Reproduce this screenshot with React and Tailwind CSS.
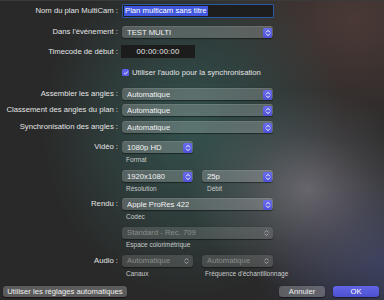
import React from 'react';

const font = { fontFamily: '"Liberation Sans", Arial, sans-serif' };

const Chevrons = ({ className = '' }) => (
  <svg className={className} viewBox="0 0 8 10" fill="none">
    <path d="M2.3 4.1 L4 2.4 L5.7 4.1 M2.3 5.9 L4 7.6 L5.7 5.9" stroke="currentColor" strokeWidth="1" strokeLinecap="round" strokeLinejoin="round" />
  </svg>
);

const Popup = ({ value, width = 'w-[151px]', disabled = false }) => (
  <div
    className={`${width} h-[12px] flex items-center justify-between rounded-[3px] pl-[5px] pr-[1px] shadow-[0_0.5px_1px_rgba(0,0,0,0.45)] ${
      disabled ? 'bg-white/[0.13] text-[#8a8d8c]' : 'bg-white/[0.2] text-[#f2f2f2] border-t border-white/10'
    }`}
  >
    <span className="text-[7.7px] leading-none truncate">{value}</span>
    {disabled ? (
      <Chevrons className="w-[9px] h-[10px] text-[#a4a6a6] mr-[1px]" />
    ) : (
      <span className="w-[9px] h-[10px] rounded-[2px] bg-gradient-to-b from-[#6a6df0] to-[#4f52d8] flex items-center justify-center">
        <Chevrons className="w-[8px] h-[10px] text-white" />
      </span>
    )}
  </div>
);

const Label = ({ children }) => (
  <div className="w-[118px] text-right text-[7.7px] leading-none text-[#e4e4e4] whitespace-nowrap">{children}</div>
);

const Row = ({ label, className = '', children }) => (
  <div className={`flex items-center ${className}`}>
    <Label>{label}</Label>
    <div className="ml-[4px] flex items-center">{children}</div>
  </div>
);

const Caption = ({ children, className = '' }) => (
  <div className={`h-[8px] flex items-center text-[6.5px] leading-none text-[#c9cccb] ${className}`}>{children}</div>
);

export default function App() {
  return (
    <div
      style={font}
      className="w-[384px] h-[300px] overflow-hidden border-t border-[#3a3a3a] flex flex-col bg-[#292929] bg-[radial-gradient(ellipse_120px_100px_at_80%_63%,rgba(128,124,134,0.7)_0%,rgba(128,124,134,0.25)_55%,transparent_100%),radial-gradient(ellipse_150px_170px_at_50%_42%,rgba(52,84,80,0.95)_0%,rgba(52,84,80,0.4)_60%,transparent_100%),radial-gradient(ellipse_150px_120px_at_92%_6%,rgba(80,60,56,0.85)_0%,transparent_100%),radial-gradient(ellipse_130px_100px_at_100%_88%,rgba(66,72,112,0.75)_0%,transparent_100%)]"
    >
      <Row label="Nom du plan MultiCam :" className="mt-[3px] h-[14px]">
        <div className="w-[152px] h-[14px] bg-[#1d1d1d] border-[1.5px] border-[#2c5aa6] rounded-[1px] flex items-center pl-[1px]">
          <span className="bg-[#4158de] text-white text-[7.7px] leading-[10px] px-[1px]">Plan multicam sans titre</span>
        </div>
      </Row>

      <Row label="Dans l'événement :" className="mt-[8px] h-[12px]">
        <Popup value="TEST MULTI" />
      </Row>

      <Row label="Timecode de début :" className="mt-[7px] h-[13px]">
        <div className="w-[74px] h-[13px] -ml-[1px] bg-[#1c1c1c] flex items-center justify-center text-[7.7px] leading-none text-[#e8e8e8] tracking-[0.2px]">
          00:00:00:00
        </div>
      </Row>

      <div className="mt-[10px] h-[9px] flex items-center pl-[122px]">
        <span className="w-[7px] h-[7px] rounded-[1.5px] bg-[#5b5ee8] flex items-center justify-center">
          <svg viewBox="0 0 8 8" className="w-[6px] h-[6px]" fill="none">
            <path d="M1.8 4.2 L3.3 5.6 L6.2 2.2" stroke="white" strokeWidth="1.1" strokeLinecap="round" strokeLinejoin="round" />
          </svg>
        </span>
        <span className="ml-[3px] text-[7.7px] leading-none text-[#e4e4e4]">Utiliser l'audio pour la synchronisation</span>
      </div>

      <Row label="Assembler les angles :" className="mt-[11px] h-[12px]">
        <Popup value="Automatique" />
      </Row>
      <Row label="Classement des angles du plan :" className="mt-[4px] h-[12px]">
        <Popup value="Automatique" />
      </Row>
      <Row label="Synchronisation des angles :" className="mt-[5px] h-[12px]">
        <Popup value="Automatique" />
      </Row>

      <Row label="Vidéo :" className="mt-[8px] h-[12px]">
        <Popup value="1080p HD" width="w-[71px]" />
      </Row>
      <Caption className="mt-[3px] pl-[126px]">Format</Caption>

      <div className="mt-[6px] h-[12px] flex items-center pl-[122px] gap-[9px]">
        <Popup value="1920x1080" width="w-[71px]" />
        <Popup value="25p" width="w-[71px]" />
      </div>
      <div className="mt-[3px] flex">
        <Caption className="pl-[126px] w-[207px]">Résolution</Caption>
        <Caption>Débit</Caption>
      </div>

      <Row label="Rendu :" className="mt-[5px] h-[12px]">
        <Popup value="Apple ProRes 422" />
      </Row>
      <Caption className="mt-[3px] pl-[126px]">Codec</Caption>

      <div className="mt-[6px] h-[12px] flex items-center pl-[122px]">
        <Popup value="Standard - Rec. 709" disabled />
      </div>
      <Caption className="mt-[2px] pl-[126px]">Espace colorimétrique</Caption>

      <Row label="Audio :" className="mt-[6px] h-[12px]">
        <div className="flex items-center gap-[9px]">
          <Popup value="Automatique" width="w-[71px]" disabled />
          <Popup value="Automatique" width="w-[71px]" disabled />
        </div>
      </Row>
      <div className="mt-[3px] flex">
        <Caption className="pl-[126px] w-[205px]">Canaux</Caption>
        <Caption>Fréquence d'échantillonnage</Caption>
      </div>

      <div className="mt-[8px] h-[11px] flex items-center px-[3px]">
        <button className="w-[124px] h-[11px] rounded-[3px] bg-white/[0.24] shadow-[0_0.5px_1px_rgba(0,0,0,0.5)] text-[7.7px] leading-none text-[#eeeeee] flex items-center justify-center">
          Utiliser les réglages automatiques
        </button>
        <div className="flex-1" />
        <button className="w-[46px] h-[11px] rounded-[3px] bg-white/[0.24] shadow-[0_0.5px_1px_rgba(0,0,0,0.5)] text-[7.7px] leading-none text-[#eeeeee] flex items-center justify-center">
          Annuler
        </button>
        <button className="ml-[8px] mr-[2px] w-[46px] h-[11px] rounded-[3px] bg-gradient-to-b from-[#6265e6] to-[#4d50cf] shadow-[0_0.5px_1px_rgba(0,0,0,0.5)] text-[7.7px] leading-none text-white flex items-center justify-center">
          OK
        </button>
      </div>
    </div>
  );
}
